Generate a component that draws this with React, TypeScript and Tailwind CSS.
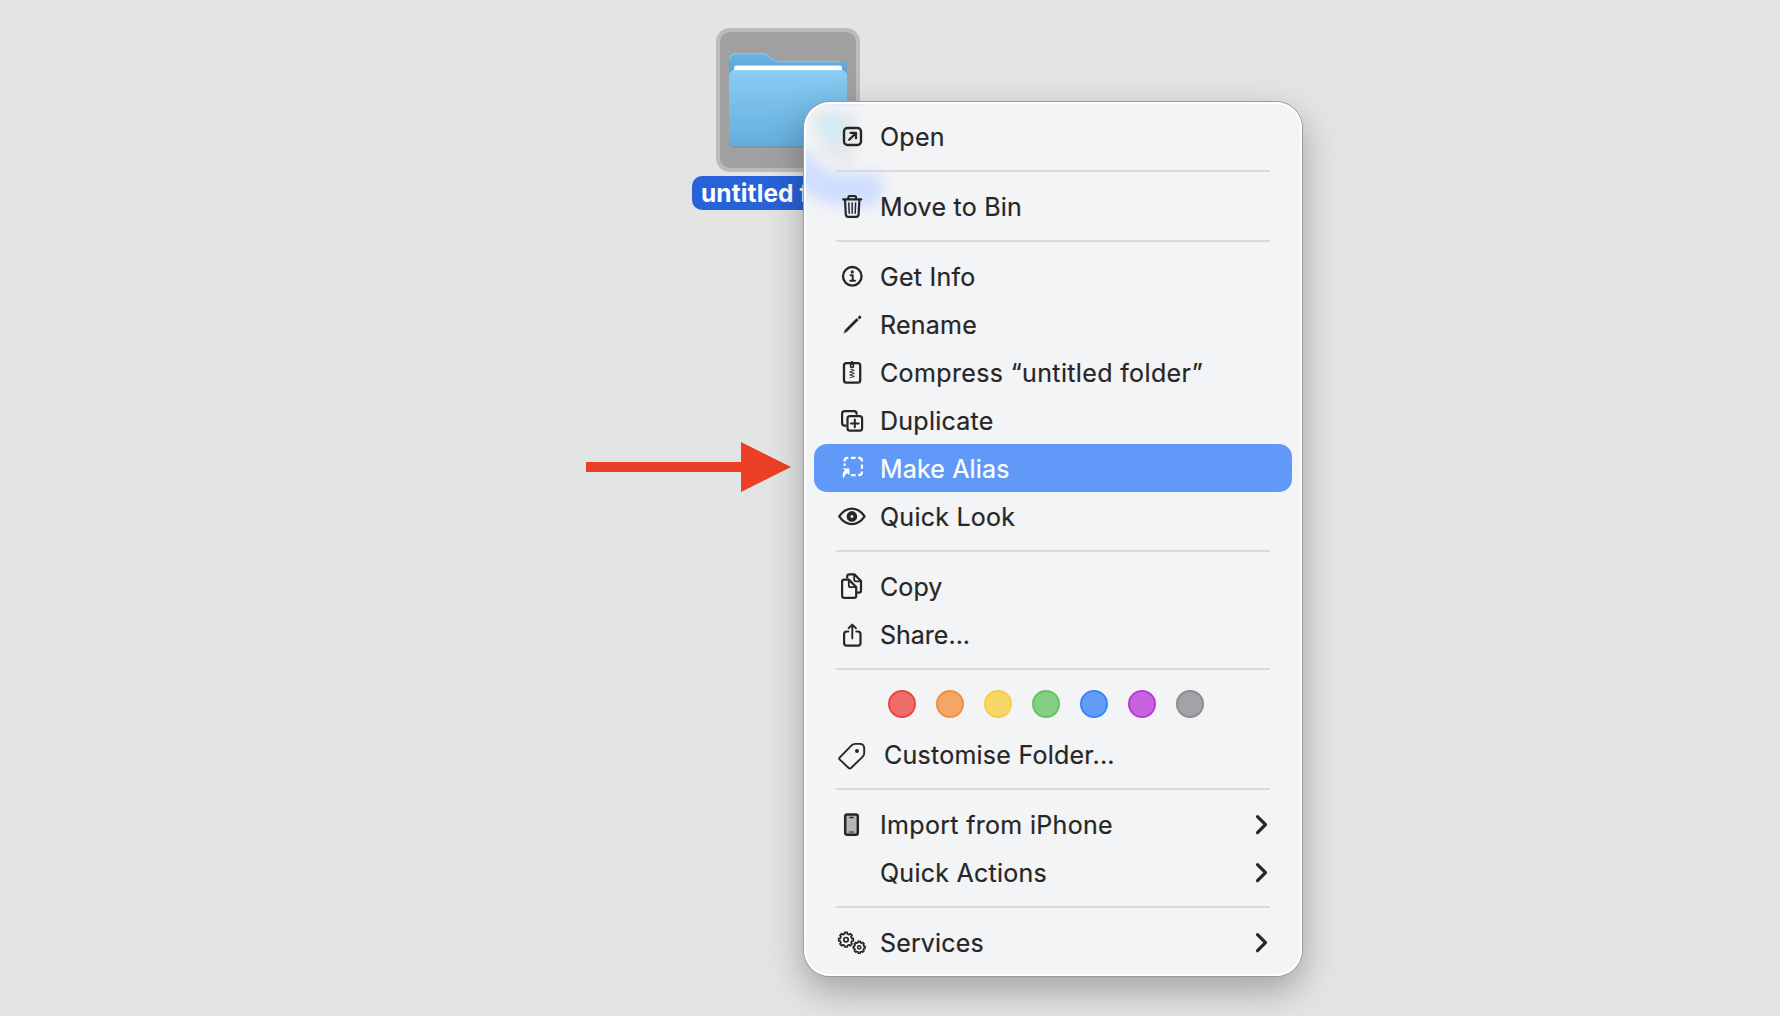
import type { ReactNode } from "react";

type Item = {
  label: string;
  icon?: ReactNode;
  tracking?: string;
  active?: boolean;
  submenu?: boolean;
};

function Icon({ children }: { children: ReactNode }) {
  return (
    <svg
      width="32"
      height="32"
      viewBox="0 0 32 32"
      fill="none"
      stroke="currentColor"
      strokeWidth="2.2"
      strokeLinecap="round"
      strokeLinejoin="round"
    >
      {children}
    </svg>
  );
}

const gear = (cx: number, cy: number, r: number, teeth: number) => {
  const pts: string[] = [];
  for (let i = 0; i < teeth; i++) {
    const a = (i * 2 * Math.PI) / teeth;
    const s = Math.PI / teeth;
    [
      [a - s * 0.45, r],
      [a + s * 0.45, r],
      [a + s * 0.6, r * 0.8],
      [a + s * 1.4, r * 0.8],
    ].forEach(([t, q]) => pts.push(`${(cx + q * Math.cos(t)).toFixed(2)},${(cy + q * Math.sin(t)).toFixed(2)}`));
  }
  return pts.join(" ");
};

const openIcon = (
  <Icon>
    <rect x="8" y="8" width="17" height="17" rx="3.5" strokeWidth="2.4" />
    <path d="M13.2 19.8 L19.6 13.4 M14.6 12.9 H20 V18.3" strokeWidth="2.2" />
  </Icon>
);

const trashIcon = (
  <Icon>
    <path d="M7.2 9.4 H25.2" />
    <path d="M12.4 8.8 V7.4 Q12.4 6 13.8 6 H18.6 Q20 6 20 7.4 V8.8" />
    <path d="M9 10 L9.8 24.4 Q9.9 26.8 12.2 26.8 H20.2 Q22.5 26.8 22.6 24.4 L23.4 10" />
    <path d="M12.8 13 L13.2 23.2 M16.2 13 V23.2 M19.6 13 L19.2 23.2" strokeWidth="1.5" />
  </Icon>
);

const infoIcon = (
  <Icon>
    <circle cx="16.3" cy="16.3" r="9.3" strokeWidth="2.3" />
    <circle cx="16.3" cy="11.9" r="1.6" fill="currentColor" stroke="none" />
    <path d="M14.6 15.2 H16.7 V20.6 M14.2 20.7 H19" strokeWidth="1.9" />
  </Icon>
);

const renameIcon = (
  <Icon>
    <path d="M8 25 L9.1 21.8 L20.6 10.2 L22.5 12.1 L11 23.6 Z" fill="currentColor" stroke="currentColor" strokeWidth="0.3" />
    <path d="M23.5 9.5 L23.8 9.2" strokeWidth="3" />
  </Icon>
);

const zipIcon = (
  <Icon>
    <rect x="8" y="7.2" width="16.2" height="19.4" rx="2.4" strokeWidth="2.3" />
    <path d="M16 6.2 V7" strokeWidth="2.6" />
    <rect x="14.6" y="8" width="2.8" height="3.4" rx="0.8" strokeWidth="1.6" />
    <path d="M14.8 13.4 L18.4 14.4 L13.6 15.9 L18.4 17.4 L13.6 18.9 L18.4 20.4 L14 21.8" strokeWidth="0.9" />
  </Icon>
);

const duplicateIcon = (
  <Icon>
    <path d="M9.8 21.6 H8.6 Q6.1 21.6 6.1 19 V9.8 Q6.1 7.2 8.7 7.2 H18 Q20.6 7.2 20.6 9.8" />
    <rect x="11.5" y="12.1" width="14.6" height="14.6" rx="2.5" />
    <path d="M18.8 15.6 V23.2 M15 19.4 H22.6" strokeWidth="2" />
  </Icon>
);

const aliasIcon = (
  <Icon>
    <path
      d="M8.6 13.8 V11.6 M8.6 9.6 V8.7 Q8.6 5.8 11.5 5.8 H12.3 M15 5.8 H19.6 M22.2 5.8 H23 Q25.9 5.8 25.9 8.7 V9.6 M25.9 12.4 V16.8 M25.9 19.4 V20.2 Q25.9 23.1 23 23.1 H22.2 M19.6 23.1 H15"
      strokeLinecap="butt"
    />
    <path d="M6.8 16.4 H13.4 V23.2 L11.2 21 Q8.6 22.6 7.6 26.6 Q5 22 8.9 18.6 Z" fill="currentColor" stroke="none" />
  </Icon>
);

const eyeIcon = (
  <Icon>
    <path d="M3.2 16.4 Q8.6 8.6 15.9 8.6 Q23.2 8.6 28.6 16.4 Q23.2 24.2 15.9 24.2 Q8.6 24.2 3.2 16.4 Z" />
    <circle cx="15.9" cy="16.4" r="3.4" strokeWidth="3.8" />
  </Icon>
);

const copyIcon = (
  <Icon>
    <path d="M11.2 7.6 V6.6 Q11.2 4.4 13.4 4.4 H18.4 L25 11 V20.4 Q25 22.6 22.8 22.6 H21.6" />
    <path d="M18.2 4.8 V9.6 Q18.2 11.4 20.2 11.4 H24.6" strokeWidth="1.8" />
    <path d="M8.3 9.6 H12.8 L20.2 17 V25.7 Q20.2 27.9 18 27.9 H8.3 Q6.1 27.9 6.1 25.7 V11.8 Q6.1 9.6 8.3 9.6 Z" />
    <path d="M12.8 10 V15.2 Q12.8 17.2 14.8 17.2 H19.8" strokeWidth="1.8" />
  </Icon>
);

const shareIcon = (
  <Icon>
    <path d="M12.2 13.5 H10.7 Q8.1 13.5 8.1 16.1 V25 Q8.1 27.6 10.7 27.6 H21.9 Q24.5 27.6 24.5 25 V16.1 Q24.5 13.5 21.9 13.5 H20.4" />
    <path d="M16.3 20.4 V7 M12.6 10.2 L16.3 6.6 L20 10.2" strokeWidth="1.9" />
  </Icon>
);

const tagIcon = (
  <Icon>
    <path
      d="M3.6 19.6 L15.8 7.2 Q17.2 5.9 19.2 5.9 H23.6 Q28.2 5.9 28.2 10.5 V15 Q28.2 17.2 26.8 18.6 L15 30 Q13.8 31 12.7 30 L3.6 21.4 Q2.8 20.5 3.6 19.6 Z"
      strokeWidth="1.9"
    />
    <circle cx="21" cy="13" r="2" fill="currentColor" stroke="none" />
  </Icon>
);

const phoneIcon = (
  <Icon>
    <rect x="9.2" y="6.4" width="12.6" height="20.4" rx="2" fill="#b4b6b7" strokeWidth="2.5" />
    <path d="M14 9.5 H17" strokeWidth="1.6" />
    <path d="M13.4 24 H17.6" strokeWidth="1" />
  </Icon>
);

const gearsIcon = (
  <Icon>
    <polygon points={gear(10, 13.7, 7.4, 8)} strokeWidth="1.7" />
    <circle cx="10" cy="13.7" r="2.2" strokeWidth="1.7" />
    <polygon points={gear(23.2, 21.3, 6, 8)} strokeWidth="1.6" />
    <circle cx="23.2" cy="21.3" r="1.6" strokeWidth="1.5" />
  </Icon>
);

const groups: Item[][] = [
  [{ label: "Open", icon: openIcon }],
  [{ label: "Move to Bin", icon: trashIcon }],
  [
    { label: "Get Info", icon: infoIcon },
    { label: "Rename", icon: renameIcon },
    { label: "Compress “untitled folder”", icon: zipIcon, tracking: "tracking-[0.36px]" },
    { label: "Duplicate", icon: duplicateIcon },
    { label: "Make Alias", icon: aliasIcon, tracking: "tracking-[0.15px]", active: true },
    { label: "Quick Look", icon: eyeIcon },
  ],
  [
    { label: "Copy", icon: copyIcon, tracking: "tracking-[0.1px]" },
    { label: "Share...", icon: shareIcon, tracking: "tracking-normal" },
  ],
];

const lowerGroups: Item[][] = [
  [
    { label: "Import from iPhone", icon: phoneIcon, tracking: "tracking-[0.32px]", submenu: true },
    { label: "Quick Actions", submenu: true },
  ],
  [{ label: "Services", icon: gearsIcon, tracking: "tracking-[0.15px]", submenu: true }],
];

const tags = [
  "bg-[#ef6e69] border-[#ec4842]",
  "bg-[#f3a665] border-[#f1913f]",
  "bg-[#f8d768] border-[#f7ce46]",
  "bg-[#84cf83] border-[#63c465]",
  "bg-[#629df8] border-[#3b85f7]",
  "bg-[#c863e0] border-[#b93ad8]",
  "bg-[#a3a3a7] border-[#8d8d91]",
];

function Row({ item }: { item: Item }) {
  return (
    <div
      className={`mx-[10px] flex h-12 items-center rounded-[13px] pl-[22px] pr-[23px] ${
        item.active ? "bg-[#6199f8] text-white" : ""
      }`}
    >
      <div className="h-8 w-8">{item.icon}</div>
      <span className={`ml-3 flex-1 whitespace-nowrap pt-[3px] ${item.tracking ?? "tracking-[0.25px]"}`}>{item.label}</span>
      {item.submenu && (
        <svg width="14" height="20" viewBox="0.5 -0.7 14 20" fill="none" stroke="currentColor" strokeWidth="3.2" strokeLinecap="round" strokeLinejoin="round" overflow="visible">
          <path d="M3 2 L11 10 L3 18" />
        </svg>
      )}
    </div>
  );
}

function Separator() {
  return <div className="mx-8 my-[10px] h-0.5 bg-[#d9dadd]" />;
}

function Folder() {
  return (
    <div className="absolute left-[692px] top-7 flex w-48 flex-col items-center">
      <div className="h-36 w-36 rounded-[14px] border-4 border-[#babbba] bg-[#9fa09f]">
        <svg width="136" height="136" viewBox="720 32 136 136">
          <defs>
            <linearGradient id="front" x1="0" y1="0" x2="0" y2="1">
              <stop offset="0" stopColor="#8acdf3" />
              <stop offset="1" stopColor="#63addd" />
            </linearGradient>
            <linearGradient id="back" x1="0" y1="0" x2="0" y2="1">
              <stop offset="0" stopColor="#6ab5e4" />
              <stop offset="0.3" stopColor="#559fd0" />
            </linearGradient>
          </defs>
          <path
            d="M729 60 Q729 53 736 53 H762 Q766.5 53 769.5 56 L772.5 59 Q775 61 779 61 H840 Q847 61 847 68 V140 H729 Z"
            fill="url(#back)"
          />
          <path d="M730 59.5 Q730 53.6 736 53.6 H762 Q766.5 53.6 769.5 56.6 L772.5 59.6 Q775 61.6 779 61.6 H840" fill="none" stroke="#84c7ee" strokeWidth="1.2" />
          <path d="M734 74 V68 Q734 65.5 736.5 65.5 H839.5 Q842 65.5 842 68 V74 Z" fill="#fff" />
          <path
            d="M729 76 Q729 70 735 70 H841 Q847 70 847 76 V141 Q847 147.5 840.5 147.5 H735.5 Q729 147.5 729 141 Z"
            fill="#777"
            opacity="0.6"
          />
          <path
            d="M729 76 Q729 70 735 70 H841 Q847 70 847 76 V140 Q847 146.6 840.5 146.6 H735.5 Q729 146.6 729 140 Z"
            fill="url(#front)"
          />
          <path d="M733 70.7 Q734 70.5 735 70.5 H841 Q842 70.5 843 70.8" fill="none" stroke="#9ad7f7" />
        </svg>
      </div>
      <div className="mt-1 h-[34px] w-48 whitespace-nowrap rounded-[10px] bg-[#2862d9] pl-[9px] text-[24.5px] font-bold leading-[35px] tracking-[0.1px] text-white">
        untitled folder
      </div>
    </div>
  );
}

// Soft colours of the folder showing through the menu's top left corner
function Glow() {
  return (
    <svg className="absolute left-0 top-0" width="150" height="140" viewBox="0 0 150 140">
      <defs>
        <filter id="soft" x="-50%" y="-50%" width="200%" height="200%">
          <feGaussianBlur stdDeviation="7" />
        </filter>
      </defs>
      <g filter="url(#soft)">
        <path d="M8 10 H50 Q56 40 48 64 Q30 66 16 46 Z" fill="#e6e8ea" />
        <ellipse cx="28" cy="25" rx="13" ry="14" fill="#cfeaf7" />
        <path d="M-10 40 L4 50 Q20 74 46 72 H78 V98 Q64 108 38 104 Q12 102 -10 80 Z" fill="#cfdeff" />
      </g>
      <path d="M20 2.5 H62" stroke="#d5e2ff" strokeWidth="1.5" filter="blur(1px)" />
    </svg>
  );
}

export default function App() {
  return (
    <div className="relative h-[1016px] w-[1780px] overflow-hidden bg-[#e3e4e4] font-['Inter',sans-serif]">
      <Folder />

      <svg className="absolute left-[586px] top-[442px]" width="206" height="50" viewBox="0 0 206 50">
        <path d="M0 20 H155 V0 L205 25 L155 50 V30 H0 Z" fill="#ec4026" />
      </svg>

      <div className="absolute left-[804px] top-[102px] w-[498px] rounded-[26px] shadow-[0_0_0_1px_#9a9b9c,0_14px_36px_rgba(0,0,0,0.3)]">
        <div className="relative overflow-hidden rounded-[26px] bg-[#f3f4f6] py-[10px] text-[25px] text-[#262626] [-webkit-text-stroke:0.2px]">
          <Glow />
          <div className="pointer-events-none absolute inset-0 rounded-[26px] border-2 border-white" />
          <div className="relative">
            {groups.map((group, i) => (
              <div key={i}>
                {group.map((item) => (
                  <Row key={item.label} item={item} />
                ))}
                <Separator />
              </div>
            ))}
            <div className="flex h-[50px] items-start gap-5 pl-[84px] pt-[10px]">
              {tags.map((tag) => (
                <div key={tag} className={`h-7 w-7 rounded-full border-2 ${tag}`} />
              ))}
            </div>
            <div className="mx-[10px] flex h-12 items-center pl-[22px]">
              {tagIcon}
              <span className="ml-4 pt-[3px] tracking-[0.25px]">Customise Folder...</span>
            </div>
            {lowerGroups.map((group, i) => (
              <div key={i}>
                <Separator />
                {group.map((item) => (
                  <Row key={item.label} item={item} />
                ))}
              </div>
            ))}
          </div>
        </div>
      </div>
    </div>
  );
}
